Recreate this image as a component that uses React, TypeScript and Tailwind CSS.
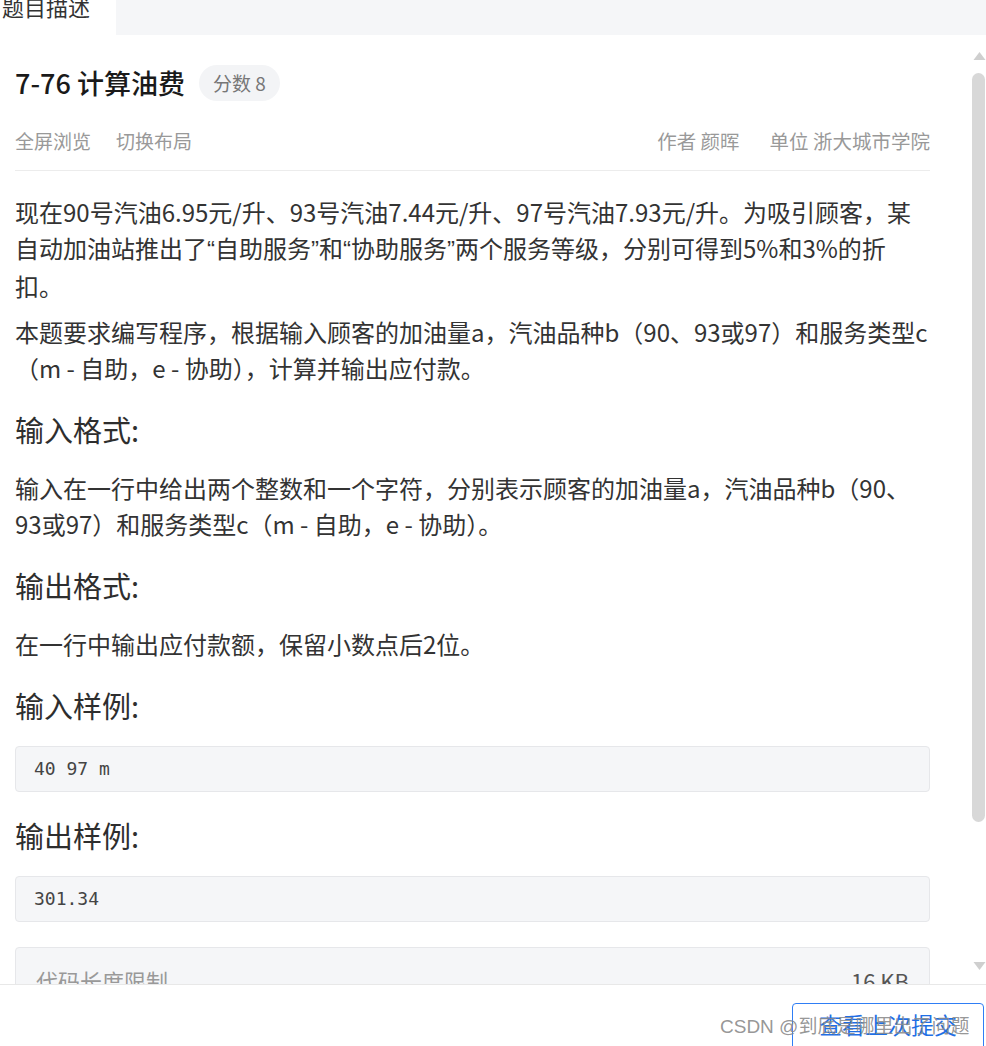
import React from "react"

const problem = {
  id: "7-76",
  title: "计算油费",
  score: 8,
  author: "颜晖",
  unit: "浙大城市学院",
}

function Q({ children }: { children: React.ReactNode }) {
  // narrow curly quotes, as in the reference font
  return <span className="font-['Liberation_Sans',sans-serif]">{children}</span>
}

function SectionTitle({ children }: { children: React.ReactNode }) {
  return (
    <h3 className="mb-[21px] mt-[23px] text-[29px] leading-[40px] font-normal text-[#2e2e2e]">
      {children}
    </h3>
  )
}

function CodeBlock({ children }: { children: React.ReactNode }) {
  return (
    <div className="flex h-[46px] items-center rounded-[4px] border border-[#e6e7ea] bg-[#f5f6f8] px-[18px] font-['DejaVu_Sans_Mono',monospace] text-[18px] text-[#444]">
      {children}
    </div>
  )
}

function Scrollbar() {
  return (
    <div className="relative w-[15px] shrink-0">
      <svg
        className="absolute left-[2px] top-[16px]"
        width="13"
        height="10"
        viewBox="0 0 13 10"
      >
        <path d="M6.5 1 L12.5 9 L0.5 9 Z" fill="#cfcfcf" />
      </svg>
      <div className="absolute left-[1px] top-[38px] h-[749px] w-[13px] rounded-full bg-[#d8d8d8]" />
      <svg
        className="absolute left-[2px] top-[926px]"
        width="13"
        height="10"
        viewBox="0 0 13 10"
      >
        <path d="M0.5 1 L12.5 1 L6.5 9 Z" fill="#cfcfcf" />
      </svg>
    </div>
  )
}

export default function App() {
  return (
    <div className="relative h-[1046px] w-[986px] overflow-hidden bg-white font-['Noto_Sans_CJK_SC',sans-serif] text-[#333]">
      <div className="flex h-[35px]">
        <div className="h-[35px] w-[116px] overflow-hidden bg-white">
          <div className="-mt-[12px] pl-[2px] text-[22px] leading-[36px] text-[#333]">
            题目描述
          </div>
        </div>
        <div className="flex-1 bg-[#f5f6f8]" />
      </div>

      <div className="flex h-[949px]">
        <div className="flex-1 overflow-hidden pl-[15px] pr-[41px]">
          <div className="flex items-center gap-[14px] pt-[30px]">
            <h1 className="text-[27px] leading-[36px] font-medium text-[#1a1a1a]">
              {problem.id} {problem.title}
            </h1>
            <span className="flex h-[36px] items-center rounded-full bg-[#f3f4f6] px-[14px] text-[19px] text-[#777]">
              分数 {problem.score}
            </span>
          </div>

          <div className="mt-[26px] flex items-center justify-between border-b border-[#ececec] pb-[15px] text-[19px] leading-[28px] text-[#999]">
            <div className="flex gap-[25px]">
              <span>全屏浏览</span>
              <span>切换布局</span>
            </div>
            <div className="flex gap-[30px] text-[19.5px]">
              <span>作者 {problem.author}</span>
              <span>单位 {problem.unit}</span>
            </div>
          </div>

          <div className="mt-[23px] text-[24px] leading-[36px] text-[#333]">
            <p>
              现在90号汽油6.95元/升、93号汽油7.44元/升、97号汽油7.93元/升。为吸引顾客，某自动加油站推出了<Q>“</Q>自助服务<Q>”</Q>和<Q>“</Q>协助服务<Q>”</Q>两个服务等级，分别可得到5%和3%的折扣。
            </p>
            <p className="mt-[10px]">
              本题要求编写程序，根据输入顾客的加油量a，汽油品种b（90、93或97）和服务类型c（m - 自助，e - 协助），计算并输出应付款。
            </p>

            <SectionTitle>输入格式:</SectionTitle>
            <p>
              输入在一行中给出两个整数和一个字符，分别表示顾客的加油量a，汽油品种b（90、93或97）和服务类型c（m - 自助，e - 协助）。
            </p>

            <SectionTitle>输出格式:</SectionTitle>
            <p>在一行中输出应付款额，保留小数点后2位。</p>

            <SectionTitle>输入样例:</SectionTitle>
            <CodeBlock>40 97 m</CodeBlock>

            <SectionTitle>输出样例:</SectionTitle>
            <CodeBlock>301.34</CodeBlock>

            <div className="mt-[25px] flex justify-between rounded-[4px] border border-[#e6e7ea] bg-[#f5f6f8] px-[20px] pb-[20px] pt-[14px] text-[22px] text-[#999]">
              <span>代码长度限制</span>
              <span className="text-[#555]">16 KB</span>
            </div>
          </div>
        </div>
        <Scrollbar />
      </div>

      <div className="flex h-[62px] justify-end border-t border-[#e8e8e8] pr-[2px] pt-[18px]">
        <button
          type="button"
          className="h-[50px] w-[192px] rounded-[4px] border border-[#2f7ef5] pb-[8px] text-[23px] text-[#1f6fe5]"
        >
          查看上次提交
        </button>
      </div>

      <div className="pointer-events-none absolute left-[720px] top-[1013px] font-['Liberation_Sans','Noto_Sans_CJK_SC',sans-serif] text-[19px] leading-[28px] text-[#8a8a8a]/90">
        CSDN @到底是哪里出了问题
      </div>
    </div>
  )
}
